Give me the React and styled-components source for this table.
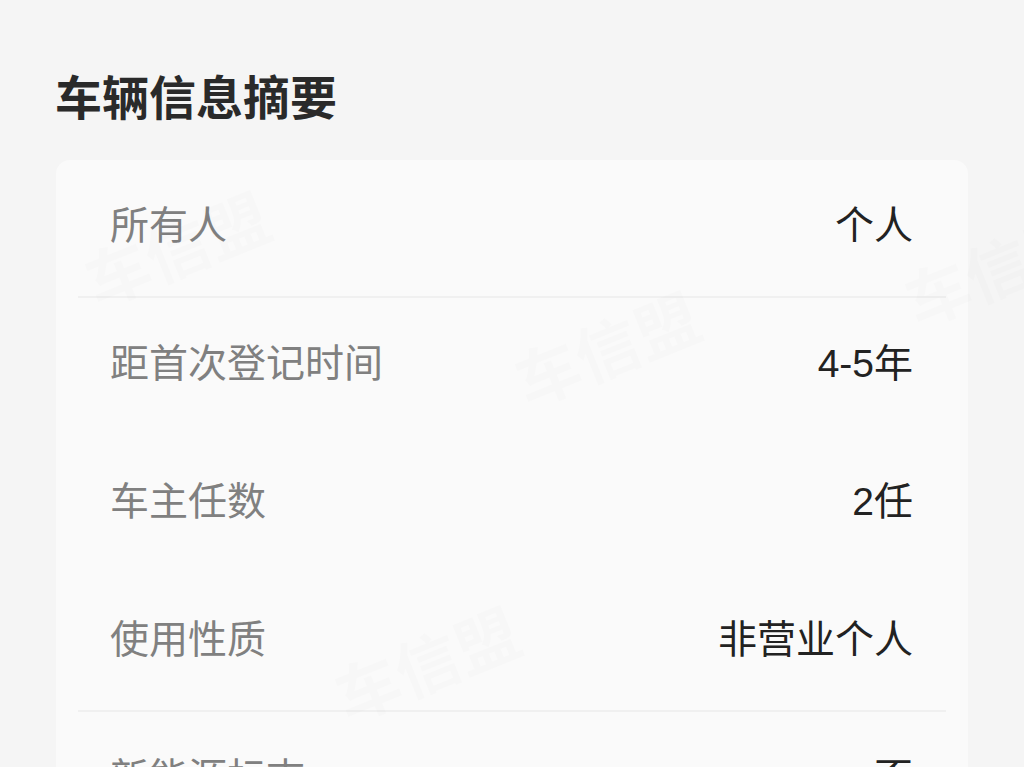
import styled, { createGlobalStyle } from "styled-components";

const GlobalStyle = createGlobalStyle`
  html, body {
    margin: 0;
    padding: 0;
    background: #f5f5f5;
  }
  body {
    font-family: "Liberation Sans", "Noto Sans CJK SC", sans-serif;
    overflow: hidden;
  }
`

const Page = styled.div`
  position: relative;
  height: 767px;
  overflow: hidden;
  padding: 0 56px;
  box-sizing: border-box;
`

const Title = styled.h1`
  margin: 0 0 33px -1px;
  padding-top: 63px;
  font-family: "Noto Sans CJK SC", sans-serif;
  font-size: 47px;
  line-height: 64px;
  font-weight: 700;
  color: #2a2a2a;
`

const Card = styled.div`
  background: #fafafa;
  border-radius: 14px;
  padding: 0 22px;
`

const Row = styled.div`
  display: flex;
  align-items: center;
  justify-content: space-between;
  height: 138px;
  box-sizing: border-box;
  padding: 0 33px 12px 32px;
  border-bottom: 2px solid ${p => (p.$divider ? "#f0f0f0" : "transparent")};
  font-size: 39px;
`

const Label = styled.span`
  color: #808080;
`

const Value = styled.span`
  color: #222;
`

const Watermark = styled.div`
  position: absolute;
  left: ${p => p.$x}px;
  top: ${p => p.$y}px;
  transform: rotate(-22deg);
  font-family: "Noto Sans CJK SC", sans-serif;
  font-size: 64px;
  font-weight: 700;
  color: rgba(0, 0, 0, 0.012);
  pointer-events: none;
  white-space: nowrap;
`

const rows = [
  { label: "所有人", value: "个人", divider: true },
  { label: "距首次登记时间", value: "4-5年" },
  { label: "车主任数", value: "2任" },
  { label: "使用性质", value: "非营业个人", divider: true },
  { label: "新能源标志", value: "否" },
]

const marks = [
  { x: 80, y: 200 },
  { x: 510, y: 300 },
  { x: 330, y: 615 },
  { x: 900, y: 220 },
]

export default function App() {
  return (
    <Page>
      <GlobalStyle />
      <Title>车辆信息摘要</Title>
      <Card>
        {rows.map(r => (
          <Row key={r.label} $divider={r.divider}>
            <Label>{r.label}</Label>
            <Value>{r.value}</Value>
          </Row>
        ))}
      </Card>
      {marks.map((m, i) => (
        <Watermark key={i} $x={m.x} $y={m.y}>车信盟</Watermark>
      ))}
    </Page>
  )
}
